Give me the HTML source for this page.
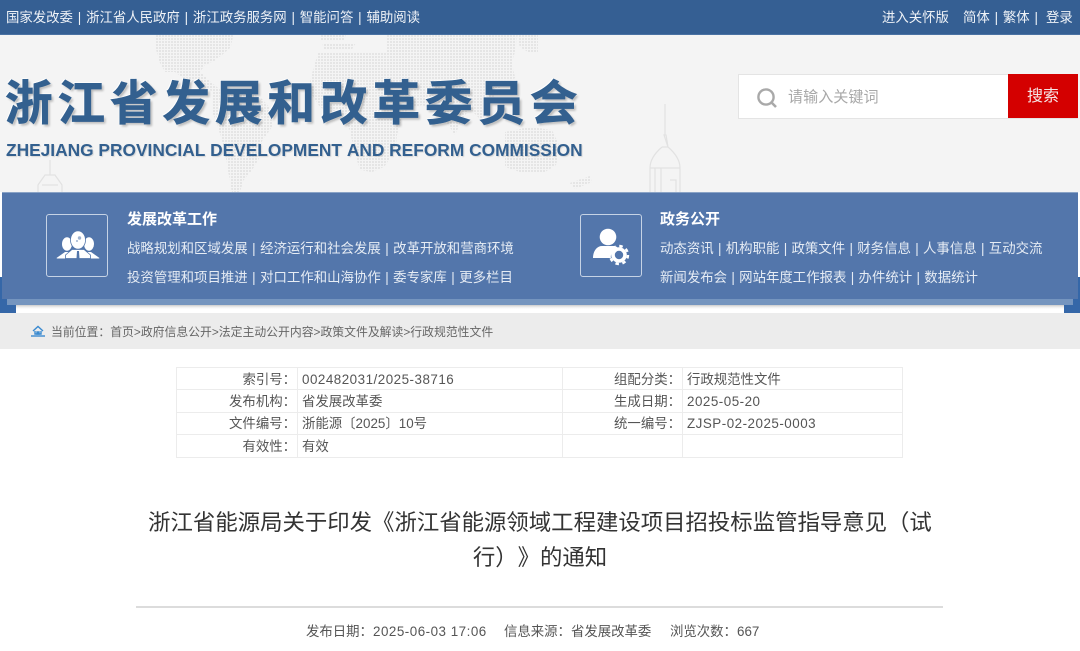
<!DOCTYPE html>
<html lang="zh-CN">
<head>
<meta charset="utf-8">
<title>浙江省发展和改革委员会</title>
<style>
*{margin:0;padding:0;box-sizing:border-box}
html,body{width:1080px;height:651px;overflow:hidden;background:#fff}
body{font-family:"Liberation Sans","Noto Sans CJK SC",sans-serif;position:relative;color:#444;text-spacing-trim:space-all;font-kerning:none}
#wrap{position:absolute;left:0;top:0;width:1080px;height:651px;filter:blur(.3px)}
.a{position:absolute;white-space:nowrap}
#top{left:0;top:0;width:1080px;height:35px;background:#355f93;border-bottom:1px solid #4a72a3}
.tt{top:9px;font-size:13.4px;line-height:18px;color:#eef2f7;word-spacing:1.1px}
#head{left:0;top:35px;width:1080px;height:157px;background:#f4f4f4;overflow:hidden}
#cn{left:5px;top:65px;font-size:47.5px;line-height:70px;font-weight:700;letter-spacing:5px;color:#33608f;font-family:"Noto Sans CJK SC",sans-serif;-webkit-text-stroke:.7px #33608f;text-shadow:2px 2px 2px rgba(0,0,0,.25),-1px -1px 0 #fff,1px 1px 0 #fff}
#en{left:6px;top:139px;font-size:17.33px;line-height:22px;font-weight:700;color:#33608f;text-shadow:1px 1px 1px rgba(0,0,0,.12)}
#sb{left:738px;top:74px;width:340px;height:45px;background:#fff;border:1px solid #e4e4e4}
#btn{left:1008px;top:74px;width:70px;height:44px;background:#d40000;color:#f6e6e6;font-size:16px;line-height:46px;text-align:center}
#ph{left:788px;top:87px;font-size:15.1px;line-height:22px;color:#a8a8a8}
.cor{background:#3567a8;top:277px;height:36px;width:16px}
#white{left:0;top:304px;width:1080px;height:9px;background:linear-gradient(#bbb,#eee 3px,#fff 5px)}
#strip{left:7px;top:299px;width:1066px;height:6px;background:#7595bf}
#panel{left:2px;top:192px;width:1076px;height:107px;background:#5376ab;border-top:1px solid #8aa3c6}
.box{top:214px;width:62px;height:63px;border:1px solid #c6d3e5;border-radius:3px}
.ph{top:210px;font-size:15px;line-height:20px;font-weight:700;color:#fff}
.ln{font-size:13.42px;line-height:20px;color:#e6ecf4;word-spacing:.75px}
#crumb{left:0;top:313px;width:1080px;height:36px;background:#ececec}
#cr{left:51px;top:323px;font-size:11.85px;line-height:18px;color:#666}
table{position:absolute;left:176px;top:367px;width:726px;border-collapse:collapse;table-layout:fixed;font-size:13.4px;color:#555}
td{border:1px solid #ececec;height:22.4px;line-height:19px;padding:1px 0 0;white-space:nowrap;overflow:hidden}
td.l{text-align:right;padding-right:1px}
td.v{padding-left:4px;letter-spacing:.5px}
#title{left:136px;top:505px;width:808px;text-align:center;font-size:22.4px;line-height:35px;color:#333;white-space:normal}
#hr{left:136px;top:606px;width:807px;height:2px;background:#dcdcdc}
.m{top:623px;font-size:13.4px;line-height:18px;color:#555}
</style>
</head>
<body>
<div id="wrap">
<div class="a" id="head">
<svg width="1080" height="157" style="position:absolute;left:0;top:0">
<defs><pattern id="d" width="3" height="3" patternUnits="userSpaceOnUse"><circle cx="1" cy="1" r=".85" fill="#d8d8d8"/></pattern></defs>
<g fill="url(#d)">
<path d="M155 0H233L231 12 222 20 214 26 205 30 200 37H165L160 28 156 14Z"/>
<path d="M175 37H200L212 48 222 56H212L198 50 184 44Z"/>
<path d="M212 57H250L262 64 273 76 272 92 262 106 260 122 252 135 243 146 240 157H232L228 135 224 112 218 92 212 76Z"/>
<path d="M320 0H346L344 5H320ZM322 8H356L352 14H324Z"/>
<path d="M318 18H387V0H517L516 12 512 28 515 43 500 52 492 66 490 78 480 84 470 74 462 84 455 100 447 88 440 76 422 70 408 74 402 82 397 100 396 115 384 132 372 137 360 135 354 115 350 96 344 82 332 80 320 72 312 60 310 46Z"/>
<path d="M517 0H538V17H528L520 12Z"/>
<path d="M505 97 530 92 552 95 560 112 556 130 545 137 520 137 505 132Z"/>
<path d="M570 148 590 141 592 147 575 154Z"/>
</g>
<g fill="none" stroke="#e2e2e2" stroke-width="1.2">
<path d="M665 69V100M662 112H668L664 100H666L668 112C675 118 680 125 680 133V157M662 112C655 118 650 125 650 133V157M650 133H680M655 133V157M661 133V157M670 145H676V157"/>
<path d="M50 125V140M38 157V150L45 140H55L62 150V157M42 150H58"/>
</g>
</svg>
</div>

<div class="a" id="top"></div>
<div class="a tt" style="left:6px">国家发改委 | 浙江省人民政府 | 浙江政务服务网 | 智能问答 | 辅助阅读</div>
<div class="a tt" style="left:882px">进入关怀版</div>
<div class="a tt" style="left:963px">简体 | 繁体 |</div>
<div class="a tt" style="left:1046px">登录</div>

<div class="a" id="cn">浙江省发展和改革委员会</div>
<div class="a" id="en">ZHEJIANG PROVINCIAL DEVELOPMENT AND REFORM COMMISSION</div>

<div class="a" id="sb"></div>
<svg class="a" style="left:756px;top:87px" width="22" height="22" fill="none" stroke="#a9a9a9"><circle cx="10" cy="10" r="7.6" stroke-width="2.4"/><path d="M15.5 15.5L20 20" stroke-width="2.6"/></svg>
<div class="a" id="ph">请输入关键词</div>
<div class="a" id="btn">搜索</div>

<div class="a cor" style="left:0"></div>
<div class="a cor" style="left:1064px"></div>
<div class="a" id="white" style="left:16px;width:1048px"></div>
<div class="a" id="strip"></div>
<div class="a" id="panel"></div>

<div class="a box" style="left:46px"></div>
<svg class="a" style="left:46px;top:214px" width="62" height="63" fill="#fff">
<ellipse cx="21" cy="30" rx="5" ry="6.800"/><ellipse cx="43" cy="30" rx="5" ry="6.800"/>
<path d="M10.500 44L19 38H26V44.500H11Z"/><path d="M53.500 44L45 38H38V44.500H53Z"/>
<path d="M19.500 44.500V41L26 35.500H38L44.500 41V44.500Z" stroke="#5376ab" stroke-width=".8"/>
<ellipse cx="32" cy="26" rx="7.500" ry="9.200" stroke="#5376ab" stroke-width=".8"/>
<path d="M31 37H33L33.500 44.500H30.500Z" fill="#5376ab"/>
<circle cx="33.500" cy="24" r="1.700" fill="#9fb3d0"/><circle cx="31" cy="27" r="1" fill="#9fb3d0"/>
</svg>
<div class="a ph" style="left:127px">发展改革工作</div>
<div class="a ln" style="left:127px;top:239px">战略规划和区域发展 | 经济运行和社会发展 | 改革开放和营商环境</div>
<div class="a ln" style="left:127px;top:268px">投资管理和项目推进 | 对口工作和山海协作 | 委专家库 | 更多栏目</div>

<div class="a box" style="left:580px"></div>
<svg class="a" style="left:580px;top:214px" width="63" height="63" fill="#fff">
<circle cx="28" cy="23" r="8.300"/>
<path d="M13 44C13 37 17 32 22 32H33C36 32 37 33 38 34 33 37 30 40 31 44Z"/>
<circle cx="39" cy="41" r="6" fill="none" stroke="#fff" stroke-width="3.600"/>
<circle cx="39" cy="41" r="9" fill="none" stroke="#fff" stroke-width="2.400" stroke-dasharray="3.500 3.570"/>
</svg>
<div class="a ph" style="left:660px">政务公开</div>
<div class="a ln" style="left:660px;top:239px;word-spacing:.6px">动态资讯 | 机构职能 | 政策文件 | 财务信息 | 人事信息 | 互动交流</div>
<div class="a ln" style="left:660px;top:268px;word-spacing:.6px">新闻发布会 | 网站年度工作报表 | 办件统计 | 数据统计</div>

<div class="a" id="crumb"></div>
<svg class="a" style="left:31px;top:325px" width="14" height="12" fill="none" stroke="#3a8ad0" stroke-width="1.400"><path d="M2 6L7 1.500 12 6M4 6V9H10V6"/><path d="M0 11H14"/><path d="M6 7H8V9H6Z" fill="#3a8ad0"/></svg>
<div class="a" id="cr">当前位置：首页&gt;政府信息公开&gt;法定主动公开内容&gt;政策文件及解读&gt;行政规范性文件</div>

<table>
<colgroup><col style="width:121px"><col style="width:265px"><col style="width:120px"><col style="width:220px"></colgroup>
<tr><td class="l">索引号：</td><td class="v">002482031/2025-38716</td><td class="l">组配分类：</td><td class="v" style="letter-spacing:0">行政规范性文件</td></tr>
<tr><td class="l">发布机构：</td><td class="v" style="letter-spacing:0">省发展改革委</td><td class="l">生成日期：</td><td class="v">2025-05-20</td></tr>
<tr><td class="l">文件编号：</td><td class="v" style="letter-spacing:0">浙能源〔2025〕10号</td><td class="l">统一编号：</td><td class="v">ZJSP-02-2025-0003</td></tr>
<tr><td class="l">有效性：</td><td class="v" style="letter-spacing:0">有效</td><td></td><td></td></tr>
</table>

<div class="a" id="title">浙江省能源局关于印发《浙江省能源领域工程建设项目招投标监管指导意见（试行）》的通知</div>
<div class="a" id="hr"></div>
<div class="a m" style="left:306px">发布日期：</div>
<div class="a m" style="left:373px;letter-spacing:.5px">2025-06-03 17:06</div>
<div class="a m" style="left:504px">信息来源：省发展改革委</div>
<div class="a m" style="left:670px">浏览次数：</div>
<div class="a m" style="left:737px">667</div>
</div>
</body>
</html>
